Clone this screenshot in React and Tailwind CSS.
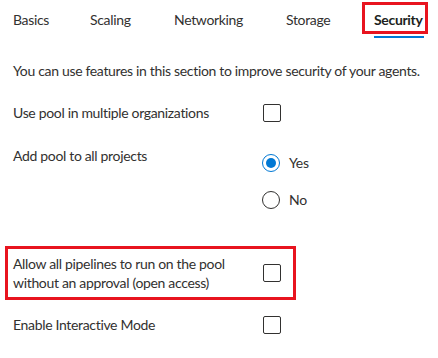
import React from "react";

function Checkbox() {
  return <div className="w-[18px] h-[18px] border border-[#323130] rounded-[2px] bg-white shrink-0" />;
}

function Radio({ checked, label }) {
  return (
    <div className="flex items-center h-[19px]">
      {checked ? (
        <div className="w-[18px] h-[18px] rounded-full border border-[#0078d4] flex items-center justify-center">
          <div className="w-[10px] h-[10px] rounded-full bg-[#0078d4]" />
        </div>
      ) : (
        <div className="w-[18px] h-[18px] rounded-full border border-[#323130]" />
      )}
      <span className="ml-[9px]">{label}</span>
    </div>
  );
}

export default function App() {
  const font = { fontFamily: 'Lato, "Noto Sans", sans-serif' };
  return (
    <div className="w-[438px] h-[358px] bg-white text-[#323130] text-[14px] leading-[19px] tracking-[-0.33px] overflow-hidden" style={font}>
      <div className="flex pl-[13px] pt-[10px] h-[38px]">
        <div className="w-[77px]">Basics</div>
        <div className="w-[84px]">Scaling</div>
        <div className="w-[112px]">Networking</div>
        <div className="w-[88px]">Storage</div>
        <div className="relative flex flex-col">
          <span className="font-bold text-[#201f1e]">Security</span>
          <div className="mt-[7px] h-[2px] w-[50px] bg-[#0078d4]" />
          <div className="absolute left-[-12px] top-[-8px] w-[66px] h-[32px] border-[3px] border-[#e8141f]" />
        </div>
      </div>
      <div className="pl-[13px] mt-[23px] whitespace-nowrap">
        You can use features in this section to improve security of your agents.
      </div>
      <div className="flex items-center pl-[13px] mt-[23px] h-[19px]">
        <div className="w-[250px]">Use pool in multiple organizations</div>
        <Checkbox />
      </div>
      <div className="flex pl-[13px] mt-[24px]">
        <div className="w-[249px]">Add pool to all projects</div>
        <div className="flex flex-col gap-[18px] mt-[7px]">
          <Radio checked label="Yes" />
          <Radio label="No" />
        </div>
      </div>
      <div className="ml-[5px] mt-[37px] w-[291px] h-[54px] border-[3px] border-[#e8141f] pl-[5px] flex items-center">
        <div className="w-[250px]">
          Allow all pipelines to run on the pool
          <br />
          without an approval (open access)
        </div>
        <Checkbox />
      </div>
      <div className="flex items-center pl-[13px] mt-[15px] h-[19px]">
        <div className="w-[250px]">Enable Interactive Mode</div>
        <Checkbox />
      </div>
    </div>
  );
}
